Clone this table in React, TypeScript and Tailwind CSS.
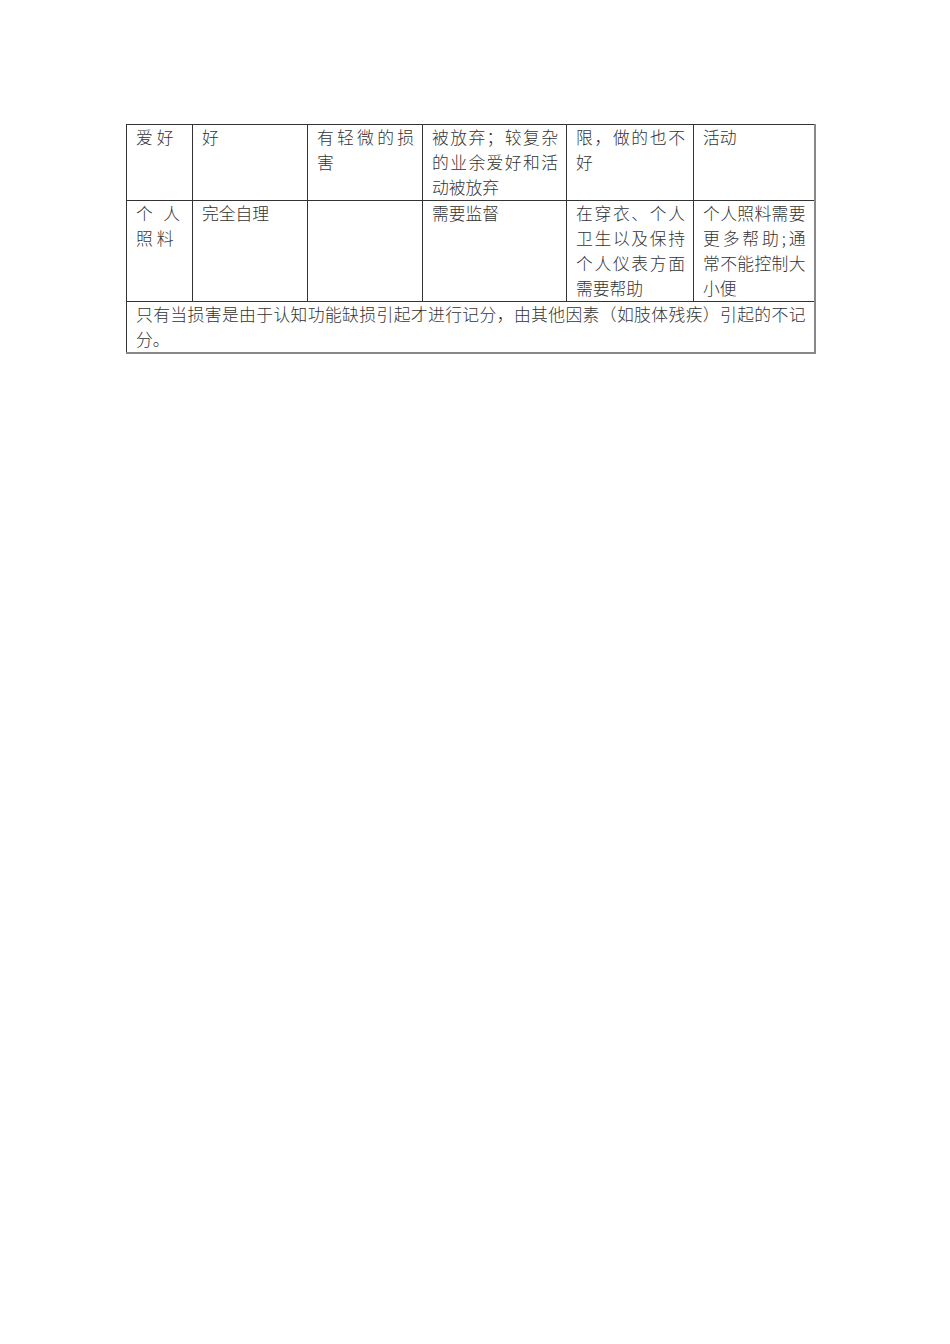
import React from 'react';

const cell = 'align-top border border-[#333] pl-[9px] pr-[8px] pt-0 pb-0 text-justify';

export default function App() {
  return (
    <div
      className="w-[950px] min-h-[1344px] bg-white pt-[124px] pl-[126px] text-[#333] font-light text-[16.8px] leading-[25px]"
      style={{ fontFamily: '"Noto Sans CJK SC", "Noto Sans", sans-serif' }}
    >
      <table className="border-collapse table-fixed w-[688px] border-b-2 border-r-2 border-b-[#888] border-r-[#888]">
        <colgroup>
          <col className="w-[66px]" />
          <col className="w-[115px]" />
          <col className="w-[115px]" />
          <col className="w-[144px]" />
          <col className="w-[127px]" />
          <col className="w-[121px]" />
        </colgroup>
        <tbody>
          <tr className="h-[75px] border-b border-b-[#888]">
            <td className={`${cell} tracking-[4px]`}>爱好</td>
            <td className={cell}>好</td>
            <td className={cell}>有轻微的损害</td>
            <td className={cell}>被放弃；较复杂的业余爱好和活动被放弃</td>
            <td className={cell}>限，做的也不好</td>
            <td className={cell}>活动</td>
          </tr>
          <tr className="h-[100px]">
            <td className={`${cell} tracking-[4px]`}>个人照料</td>
            <td className={cell}>完全自理</td>
            <td className={cell}></td>
            <td className={cell}>需要监督</td>
            <td className={cell}>在穿衣、个人卫生以及保持个人仪表方面需要帮助</td>
            <td className={cell}>个人照料需要更多帮助;通常不能控制大小便</td>
          </tr>
          <tr className="h-[50px]">
            <td colSpan={6} className={`${cell} border-t-[#888]`}>
              只有当损害是由于认知功能缺损引起才进行记分，由其他因素（如肢体残疾）引起的不记分。
            </td>
          </tr>
        </tbody>
      </table>
    </div>
  );
}
